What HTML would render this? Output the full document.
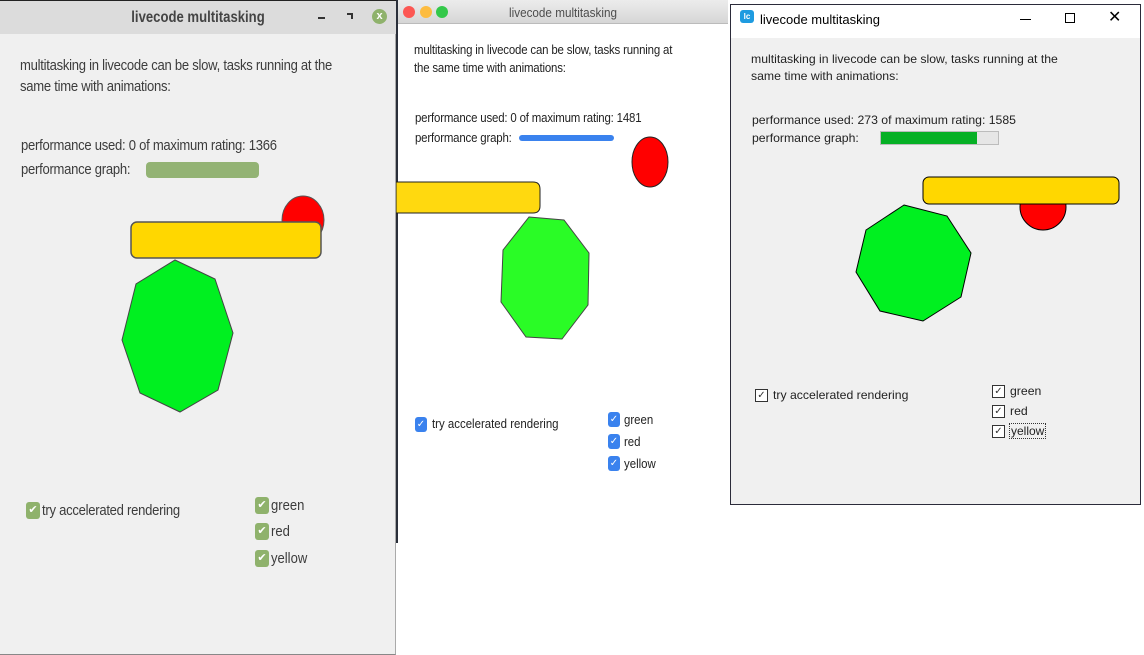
<!DOCTYPE html>
<html><head><meta charset="utf-8"><style>
*{margin:0;padding:0;box-sizing:border-box}
body{width:1144px;height:655px;background:#fff;position:relative;overflow:hidden;font-family:"Liberation Sans",sans-serif;color:#333}
.a{position:absolute;white-space:nowrap}
.L{transform:scaleX(.87);transform-origin:0 0}
.M{transform:scaleX(.88);transform-origin:0 0}
.R{transform:scaleX(1.02);transform-origin:0 0}
</style></head><body>
<!-- Left window -->
<div class="a" style="left:0;top:0;width:396px;height:655px;background:#f0f0f0;border-right:1px solid #aaa;border-bottom:1px solid #888"></div>
<div class="a" style="left:0;top:0;width:396px;height:34px;background:#dcdcdc;border-top:1px solid #222"></div>
<div class="a" style="left:0;top:9px;width:396px;text-align:center;font-size:16px;font-weight:bold;color:#444;transform:scaleX(.82)">livecode multitasking</div>
<div class="a" style="left:318px;top:17px;width:7px;height:2px;background:#333"></div>
<div class="a" style="left:347px;top:13px;width:6px;height:6px;border-top:2px solid #333;border-right:2px solid #333"></div>
<div class="a" style="left:372px;top:9px;width:15px;height:15px;border-radius:50%;background:#8fb26c;color:#fff;font-size:11px;font-weight:bold;text-align:center;line-height:15px">x</div>
<div class="a L" style="left:20px;top:55px;font-size:15px;line-height:21px;color:#3c3c3c;letter-spacing:-0.3px">multitasking in livecode can be slow, tasks running at the<br>same time with animations:</div>
<div class="a L" style="left:21px;top:137px;font-size:15px;color:#3c3c3c;letter-spacing:-0.3px">performance used: 0 of maximum rating: 1366</div>
<div class="a L" style="left:21px;top:161px;font-size:15px;color:#3c3c3c;letter-spacing:-0.3px">performance graph:</div>
<div class="a" style="left:146px;top:162px;width:113px;height:16px;background:#93b374;border-radius:4px"></div>
<svg class="a" style="left:0;top:0" width="396" height="655">
<ellipse cx="303" cy="220" rx="21" ry="24" fill="#f00" stroke="#555"/>
<rect x="131" y="222" width="190" height="36" rx="6" fill="#ffd700" stroke="#555" stroke-width="1.5"/>
<polygon points="175,260 215,279 233,333 218,390 180,412 140,393 122,340 136,284" fill="#00f020" stroke="#444"/>
</svg>
<div class="a" style="left:26px;top:502px;width:14px;height:17px;background:#8fb26c;border-radius:3px;color:#fff;font-size:11px;text-align:center;line-height:17px">✔</div>
<div class="a L" style="left:42px;top:502px;font-size:15px;color:#3c3c3c;letter-spacing:-0.3px">try accelerated rendering</div>
<div class="a" style="left:255px;top:497px;width:14px;height:17px;background:#8fb26c;border-radius:3px;color:#fff;font-size:11px;text-align:center;line-height:17px">✔</div>
<div class="a L" style="left:271px;top:497px;font-size:15px;color:#3c3c3c">green</div>
<div class="a" style="left:255px;top:523px;width:14px;height:17px;background:#8fb26c;border-radius:3px;color:#fff;font-size:11px;text-align:center;line-height:17px">✔</div>
<div class="a L" style="left:271px;top:523px;font-size:15px;color:#3c3c3c">red</div>
<div class="a" style="left:255px;top:550px;width:14px;height:17px;background:#8fb26c;border-radius:3px;color:#fff;font-size:11px;text-align:center;line-height:17px">✔</div>
<div class="a L" style="left:271px;top:550px;font-size:15px;color:#3c3c3c">yellow</div>

<!-- Middle window -->
<div class="a" style="left:396px;top:0;width:332px;height:543px;background:#fff;border-left:2px solid #2a2f3a"></div>
<div class="a" style="left:398px;top:0;width:330px;height:24px;background:linear-gradient(#ececec,#d6d6d6);border-bottom:1px solid #bbb"></div>
<div class="a" style="left:403px;top:6px;width:12px;height:12px;border-radius:50%;background:#fc5753"></div>
<div class="a" style="left:420px;top:6px;width:12px;height:12px;border-radius:50%;background:#fdbc40"></div>
<div class="a" style="left:436px;top:6px;width:12px;height:12px;border-radius:50%;background:#34c84a"></div>
<div class="a" style="left:398px;top:5px;width:330px;text-align:center;font-size:13px;color:#4d4d4d;transform:scaleX(.9)">livecode multitasking</div>
<div class="a M" style="left:414px;top:41px;font-size:13px;line-height:18px;color:#222;letter-spacing:-0.2px">multitasking in livecode can be slow, tasks running at<br>the same time with animations:</div>
<div class="a M" style="left:415px;top:110px;font-size:13px;color:#222;letter-spacing:-0.2px">performance used: 0 of maximum rating: 1481</div>
<div class="a M" style="left:415px;top:130px;font-size:13px;color:#222;letter-spacing:-0.2px">performance graph:</div>
<div class="a" style="left:519px;top:135px;width:95px;height:6px;background:#3a82ee;border-radius:3px"></div>
<svg class="a" style="left:396px;top:0" width="332" height="543">
<ellipse cx="254" cy="162" rx="18" ry="25" fill="#f00" stroke="#222"/>
<path d="M0,182 H137 Q144,182 144,189 V206 Q144,213 137,213 H0 Z" fill="#ffd90f" stroke="#222"/>
<polygon points="133,217 168,220 193,253 192,305 166,339 130,337 105,302 107,250" fill="#2afc26" stroke="#444"/>
</svg>
<div class="a" style="left:415px;top:417px;width:12px;height:15px;background:#3a82ee;border-radius:3px;color:#fff;font-size:10px;text-align:center;line-height:15px">✓</div>
<div class="a M" style="left:432px;top:416px;font-size:13px;color:#222">try accelerated rendering</div>
<div class="a" style="left:608px;top:412px;width:12px;height:15px;background:#3a82ee;border-radius:3px;color:#fff;font-size:10px;text-align:center;line-height:15px">✓</div>
<div class="a M" style="left:624px;top:412px;font-size:13px;color:#222">green</div>
<div class="a" style="left:608px;top:434px;width:12px;height:15px;background:#3a82ee;border-radius:3px;color:#fff;font-size:10px;text-align:center;line-height:15px">✓</div>
<div class="a M" style="left:624px;top:434px;font-size:13px;color:#222">red</div>
<div class="a" style="left:608px;top:456px;width:12px;height:15px;background:#3a82ee;border-radius:3px;color:#fff;font-size:10px;text-align:center;line-height:15px">✓</div>
<div class="a M" style="left:624px;top:456px;font-size:13px;color:#222">yellow</div>

<!-- Right window -->
<div class="a" style="left:730px;top:4px;width:411px;height:501px;background:#f0f0f0;border:1px solid #2b2b3a"></div>
<div class="a" style="left:731px;top:5px;width:409px;height:33px;background:#fff"></div>
<div class="a" style="left:740px;top:10px;width:14px;height:13px;background:#1e9be0;border-radius:3px;color:#fff;font-size:8px;font-weight:bold;line-height:13px;text-align:center">lc</div>
<div class="a" style="left:760px;top:12px;font-size:13px;color:#000">livecode multitasking</div>
<div class="a" style="left:1020px;top:19px;width:11px;height:1px;background:#000"></div>
<div class="a" style="left:1065px;top:13px;width:10px;height:10px;border:1px solid #000"></div>
<div class="a" style="left:1108px;top:8px;font-size:16px;color:#000;line-height:20px">✕</div>
<div class="a R" style="left:751px;top:51px;font-size:12px;line-height:17px;color:#222">multitasking in livecode can be slow, tasks running at the<br>same time with animations:</div>
<div class="a R" style="left:752px;top:113px;font-size:12px;color:#222">performance used: 273 of maximum rating: 1585</div>
<div class="a R" style="left:752px;top:131px;font-size:12px;color:#222">performance graph:</div>
<div class="a" style="left:880px;top:131px;width:119px;height:14px;background:#e6e6e6;border:1px solid #bcbcbc"><div style="width:96px;height:12px;background:#06b025"></div></div>
<svg class="a" style="left:730px;top:0" width="411" height="505">
<circle cx="313" cy="207" r="23" fill="#f00" stroke="#000"/>
<rect x="193" y="177" width="196" height="27" rx="6" fill="#ffd700" stroke="#000"/>
<polygon points="174,205 217,216 241,253 231,297 193,321 150,311 126,272 136,230" fill="#00f020" stroke="#000"/>
</svg>
<div class="a" style="left:755px;top:389px;width:13px;height:13px;border:1px solid #333;background:#fff;font-size:10px;line-height:11px;text-align:center;color:#333">✓</div>
<div class="a R" style="left:773px;top:388px;font-size:12px;color:#222">try accelerated rendering</div>
<div class="a" style="left:992px;top:385px;width:13px;height:13px;border:1px solid #333;background:#fff;font-size:10px;line-height:11px;text-align:center;color:#333">✓</div>
<div class="a R" style="left:1010px;top:384px;font-size:12px;color:#222">green</div>
<div class="a" style="left:992px;top:405px;width:13px;height:13px;border:1px solid #333;background:#fff;font-size:10px;line-height:11px;text-align:center;color:#333">✓</div>
<div class="a R" style="left:1010px;top:404px;font-size:12px;color:#222">red</div>
<div class="a" style="left:992px;top:425px;width:13px;height:13px;border:1px solid #333;background:#fff;font-size:10px;line-height:11px;text-align:center;color:#333">✓</div>
<div class="a" style="left:1009px;top:423px;font-size:12px;color:#222;border:1px dotted #333;padding:0 1px">yellow</div>
</body></html>
